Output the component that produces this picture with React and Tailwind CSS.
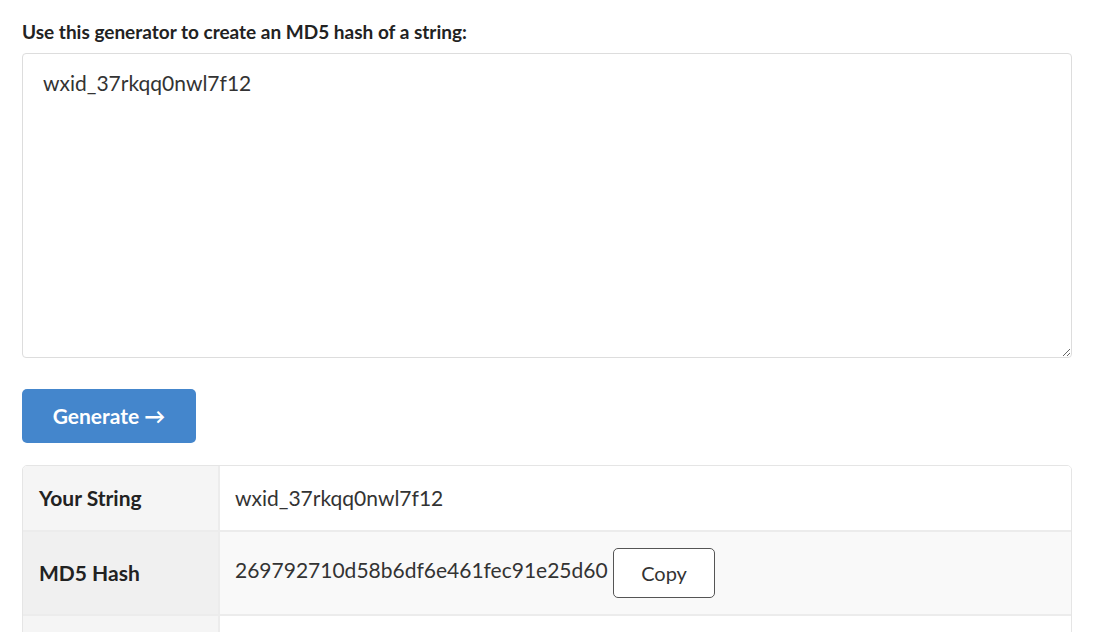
export default function App() {
  return (
    <div className="min-h-screen bg-white px-[22px] pt-[18px] text-[#333]" style={{ fontFamily: 'Lato, "Liberation Sans", sans-serif' }}>
      <p className="text-[19px] font-bold leading-[28px] text-[#222] mb-[7px]">
        Use this generator to create an MD5 hash of a string:
      </p>
      <textarea
        className="block w-[1050px] h-[305px] border border-[#dddddd] rounded-[4px] px-[20px] py-[14px] text-[21px] leading-[30px] text-[#333] outline-none resize-y"
        style={{ fontFamily: 'Lato, "Liberation Sans", sans-serif' }}
        defaultValue="wxid_37rkqq0nwl7f12"
      />
      <button className="mt-[31px] w-[174px] h-[54px] rounded-[5px] bg-[#4486cc] text-white text-[21px] font-bold">
        Generate →
      </button>
      <div className="mt-[22px] w-[1050px] border border-[#e5e5e5] rounded-t-[5px] overflow-hidden">
        <table className="w-full border-collapse text-[21px] leading-[30px]">
          <tbody>
            <tr className="h-[65px] border-b-[2px] border-[#ececec]">
              <th className="w-[196px] bg-[#f5f5f5] border-r-[2px] border-[#ececec] px-[16px] text-left font-bold text-[#222]">
                Your String
              </th>
              <td className="px-[15px] bg-white">wxid_37rkqq0nwl7f12</td>
            </tr>
            <tr className="h-[84px] border-b-[2px] border-[#ececec]">
              <th className="bg-[#f0f0f0] border-r-[2px] border-[#ececec] px-[16px] text-left font-bold text-[#222]">
                MD5 Hash
              </th>
              <td className="px-[15px] bg-[#f9f9f9]">
                <span>269792710d58b6df6e461fec91e25d60</span>{' '}
                <button className="inline-block align-middle w-[102px] h-[50px] border border-[#555] rounded-[5px] bg-white text-[20px] text-[#333]">
                  Copy
                </button>
              </td>
            </tr>
            <tr className="h-[40px]">
              <th className="bg-[#f5f5f5] border-r-[2px] border-[#ececec]"></th>
              <td className="bg-white"></td>
            </tr>
          </tbody>
        </table>
      </div>
    </div>
  )
}
